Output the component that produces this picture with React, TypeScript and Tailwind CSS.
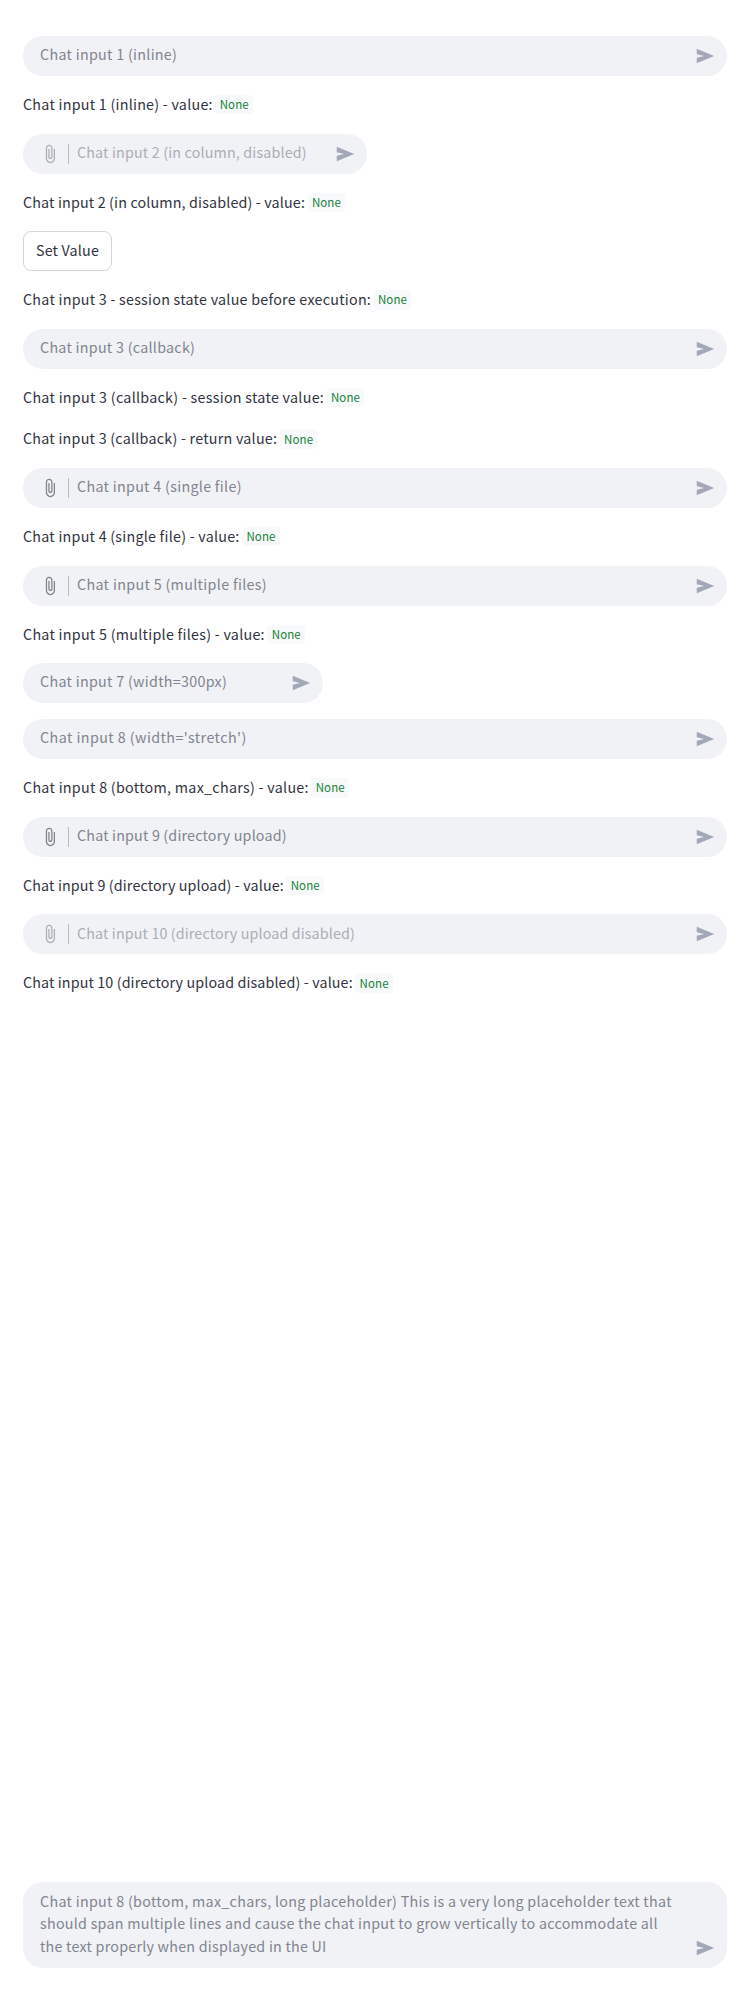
import React from "react";

const sans = "font-['Noto_Sans_CJK_SC','Open_Sans',sans-serif]";

function SendIcon() {
  return (
    <svg viewBox="0 0 24 24" className="block size-[22px] shrink-0 fill-[#a3a8b8]" aria-hidden="true">
      <path d="M3 20v-6l8-2-8-2V4l19 8z" />
    </svg>
  );
}

function ClipIcon({ disabled }: { disabled?: boolean }) {
  return (
    <svg
      viewBox="0 0 24 24"
      className={disabled ? "block size-5 shrink-0 fill-[#acadb3]" : "block size-5 shrink-0 fill-[#7f818b]"}
      aria-hidden="true"
    >
      <path d="M16.5 6v11.5c0 2.21-1.79 4-4 4s-4-1.79-4-4V5c0-1.38 1.12-2.5 2.5-2.5s2.5 1.12 2.5 2.5v10.5c0 .55-.45 1-1 1s-1-.45-1-1V6H10v9.5c0 1.38 1.12 2.5 2.5 2.5s2.5-1.12 2.5-2.5V5c0-2.21-1.79-4-4-4S7 2.79 7 5v12.5c0 3.04 2.46 5.5 5.5 5.5s5.5-2.46 5.5-5.5V6h-1.5z" />
    </svg>
  );
}

type ChatInputProps = { label: string; track: string; file?: boolean; disabled?: boolean; width?: string };

function ChatInput({ label, track, file, disabled, width = "w-full" }: ChatInputProps) {
  return (
    <div className={`flex h-10 items-center rounded-[20px] bg-[#f0f2f6] pr-[10.8px] pl-[17px] ${width}`}>
      {file && (
        <div className="flex shrink-0 items-center">
          <ClipIcon disabled={disabled} />
          <div className="mr-2 ml-2 h-5 w-px bg-[#b7bac4]" />
        </div>
      )}
      <div
        className={`min-w-0 flex-1 pb-[3px] leading-[22.4px] whitespace-nowrap ${track} ${disabled ? "text-[#acadb3]" : "text-[#82848e]"}`}
      >
        {label}
      </div>
      <SendIcon />
    </div>
  );
}

function Value({ label, track }: { label: string; track: string }) {
  return (
    <p className="flex h-[25.6px] items-center whitespace-nowrap">
      <span className={`pb-[2px] ${track}`}>{label}</span>
      <code className="ml-[2.5px] flex h-[19.4px] w-[37.8px] items-center justify-center rounded bg-[#f8f9fb] font-['Noto_Sans_CJK_SC','Liberation_Mono',monospace] text-[11.5px] tracking-[0.1px] text-[#158237]">
        None
      </code>
    </p>
  );
}

export default function App() {
  return (
    <div className={`flex h-[2000px] w-full flex-col justify-between bg-white px-[23px] pt-9 pb-8 text-[14.3px] text-[#31333f] ${sans}`}>
      <main className="flex flex-col items-start gap-4">
        <ChatInput label="Chat input 1 (inline)" track="tracking-[0.29px]" />
        <Value label="Chat input 1 (inline) - value:" track="tracking-[0.25px]" />
        <ChatInput label="Chat input 2 (in column, disabled)" track="tracking-[0.16px]" file disabled width="w-[344px]" />
        <Value label="Chat input 2 (in column, disabled) - value:" track="tracking-[0.15px]" />
        <button className="flex h-10 w-[89px] items-center justify-center rounded-lg border border-[#d6d6d9] bg-white pb-[2px] tracking-[0.17px]">
          Set Value
        </button>
        <Value label="Chat input 3 - session state value before execution:" track="tracking-[0.25px]" />
        <ChatInput label="Chat input 3 (callback)" track="tracking-[0.27px]" />
        <Value label="Chat input 3 (callback) - session state value:" track="tracking-[0.28px]" />
        <Value label="Chat input 3 (callback) - return value:" track="tracking-[0.24px]" />
        <ChatInput label="Chat input 4 (single file)" track="tracking-[0.3px]" file />
        <Value label="Chat input 4 (single file) - value:" track="tracking-[0.24px]" />
        <ChatInput label="Chat input 5 (multiple files)" track="tracking-[0.33px]" file />
        <Value label="Chat input 5 (multiple files) - value:" track="tracking-[0.27px]" />
        <ChatInput label="Chat input 7 (width=300px)" track="tracking-[0.29px]" width="w-[300px]" />
        <ChatInput label="Chat input 8 (width='stretch')" track="tracking-[0.43px]" />
        <Value label="Chat input 8 (bottom, max_chars) - value:" track="tracking-[0.285px]" />
        <ChatInput label="Chat input 9 (directory upload)" track="tracking-[0.17px]" file />
        <Value label="Chat input 9 (directory upload) - value:" track="tracking-[0.13px]" />
        <ChatInput label="Chat input 10 (directory upload disabled)" track="tracking-[0.125px]" file disabled />
        <Value label="Chat input 10 (directory upload disabled) - value:" track="tracking-[0.115px]" />
      </main>

      <footer className="flex h-[86px] items-end rounded-[20px] bg-[#f0f2f6] pr-[10.8px] pb-[9px] pl-[17px]">
        <div className="flex-1 self-start pt-2 leading-[22.4px] whitespace-nowrap text-[#82848e]">
          <div className="tracking-[0.294px]">Chat input 8 (bottom, max_chars, long placeholder) This is a very long placeholder text that</div>
          <div className="tracking-[0.258px]">should span multiple lines and cause the chat input to grow vertically to accommodate all</div>
          <div className="tracking-[0.23px]">the text properly when displayed in the UI</div>
        </div>
        <SendIcon />
      </footer>
    </div>
  );
}
